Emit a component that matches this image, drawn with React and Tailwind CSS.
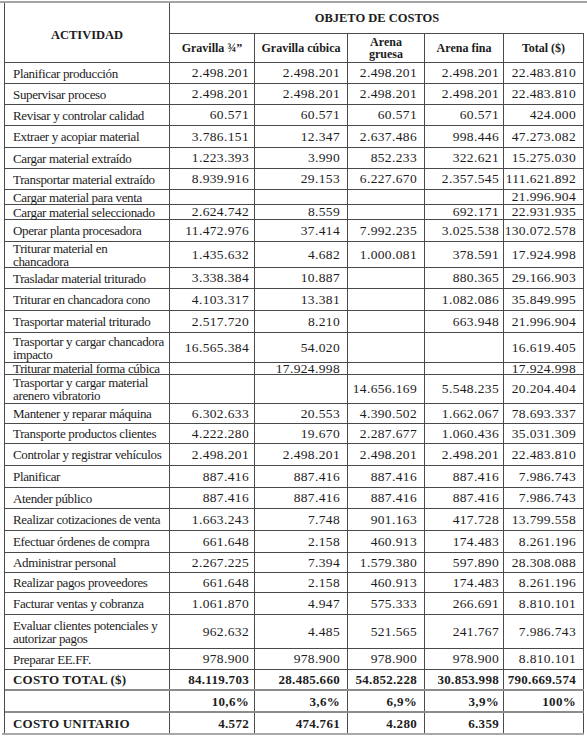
import React from "react";

// filas: [etiqueta, alto, gravilla 3/4, gravilla cubica, arena gruesa, arena fina, total]
const rows = [
  ["Planificar producción", "h-[21px]", "2.498.201", "2.498.201", "2.498.201", "2.498.201", "22.483.810"],
  ["Supervisar proceso", "h-[21px]", "2.498.201", "2.498.201", "2.498.201", "2.498.201", "22.483.810"],
  ["Revisar y controlar calidad", "h-[21px]", "60.571", "60.571", "60.571", "60.571", "424.000"],
  ["Extraer y acopiar material", "h-[22px]", "3.786.151", "12.347", "2.637.486", "998.446", "47.273.082"],
  ["Cargar material extraído", "h-[21px]", "1.223.393", "3.990", "852.233", "322.621", "15.275.030"],
  ["Transportar material extraído", "h-[21px]", "8.939.916", "29.153", "6.227.670", "2.357.545", "111.621.892"],
  ["Cargar material para venta", "h-[15px]", "", "", "", "", "21.996.904"],
  ["Cargar material seleccionado", "h-[15px]", "2.624.742", "8.559", "", "692.171", "22.931.935"],
  ["Operar planta procesadora", "h-[22px]", "11.472.976", "37.414", "7.992.235", "3.025.538", "130.072.578"],
  [["Triturar material en", "chancadora"], "h-[26px]", "1.435.632", "4.682", "1.000.081", "378.591", "17.924.998"],
  ["Trasladar material triturado", "h-[21px]", "3.338.384", "10.887", "", "880.365", "29.166.903"],
  ["Triturar en chancadora cono", "h-[22px]", "4.103.317", "13.381", "", "1.082.086", "35.849.995"],
  ["Trasportar material triturado", "h-[22px]", "2.517.720", "8.210", "", "663.948", "21.996.904"],
  [["Trasportar y cargar chancadora", "impacto"], "h-[30px]", "16.565.384", "54.020", "", "", "16.619.405"],
  ["Triturar material forma cúbica", "h-[12px]", "", "17.924.998", "", "", "17.924.998"],
  [["Trasportar y cargar material", "arenero vibratorio"], "h-[29px]", "", "", "14.656.169", "5.548.235", "20.204.404"],
  ["Mantener y reparar máquina", "h-[20px]", "6.302.633", "20.553", "4.390.502", "1.662.067", "78.693.337"],
  ["Transporte productos clientes", "h-[20px]", "4.222.280", "19.670", "2.287.677", "1.060.436", "35.031.309"],
  ["Controlar y registrar vehículos", "h-[22px]", "2.498.201", "2.498.201", "2.498.201", "2.498.201", "22.483.810"],
  ["Planificar", "h-[22px]", "887.416", "887.416", "887.416", "887.416", "7.986.743"],
  ["Atender público", "h-[21px]", "887.416", "887.416", "887.416", "887.416", "7.986.743"],
  ["Realizar cotizaciones de venta", "h-[22px]", "1.663.243", "7.748", "901.163", "417.728", "13.799.558"],
  ["Efectuar órdenes de compra", "h-[22px]", "661.648", "2.158", "460.913", "174.483", "8.261.196"],
  ["Administrar personal", "h-[20px]", "2.267.225", "7.394", "1.579.380", "597.890", "28.308.088"],
  ["Realizar pagos proveedores", "h-[20px]", "661.648", "2.158", "460.913", "174.483", "8.261.196"],
  ["Facturar ventas y cobranza", "h-[22px]", "1.061.870", "4.947", "575.333", "266.691", "8.810.101"],
  [["Evaluar clientes potenciales y", "autorizar pagos"], "h-[34px]", "962.632", "4.485", "521.565", "241.767", "7.986.743"],
  ["Preparar EE.FF.", "h-[21px]", "978.900", "978.900", "978.900", "978.900", "8.810.101"],
];

// ancho de cada columna (incluye su borde derecho) y su margen derecho
const colW = ["w-[85px]", "w-[93px]", "w-[77px]", "w-[79px]", "w-[80px]"];
const numPad = ["pr-[5px]", "pr-[7px]", "pr-[7px]", "pr-[4px]", "pr-[7px]"];

const line = "border-[#4a4a4a]";
const labelCls = `w-[165px] shrink-0 border-r ${line} pl-[8px] flex items-center whitespace-nowrap text-[13px] tracking-[-0.35px] leading-[13px]`;
const numBase = `shrink-0 border-r ${line} flex items-center justify-end whitespace-nowrap`;

const Label = ({ text }) =>
  Array.isArray(text) ? (
    <span>
      {text[0]}
      <br />
      {text[1]}
    </span>
  ) : (
    <span>{text}</span>
  );

const Row = ({ h, border, label, vals, bold, big }) => (
  <div className={`flex ${h} ${border}`}>
    <div className={`${labelCls} ${bold ? "font-bold text-[12.5px] tracking-[0.2px]" : ""}`}>
      {label && <Label text={label} />}
    </div>
    {vals.map((v, j) => (
      <div
        key={j}
        className={`${numBase} ${colW[j]} ${numPad[j]} ${
          bold ? "font-bold text-[13px] tracking-[0.3px]" : "text-[13.5px] tracking-[0.35px]"
        } ${big ? "leading-[13px]" : "leading-[12px]"}`}
      >
        {v}
      </div>
    ))}
  </div>
);

export default function App() {
  return (
    <div className="w-[587px] h-[738px] bg-white pt-[1px] overflow-hidden font-['Liberation_Serif',serif] text-[#1c1c1c]">
      <div className="h-[2px] w-full bg-[#a3a3a3]" />
      <div className={`ml-[4px] w-[580px] border-l ${line}`}>
        {/* encabezado */}
        <div className={`flex h-[60px] border-b ${line}`}>
          <div className={`w-[165px] shrink-0 border-r ${line} flex items-center justify-center pt-[5px] text-[12.5px] font-bold`}>
            ACTIVIDAD
          </div>
          <div className="flex flex-col flex-1">
            <div className={`h-[31px] border-b ${line} flex items-center justify-center text-[12.5px] font-bold`}>
              OBJETO DE COSTOS
            </div>
            <div className="flex flex-1 text-[12px] font-bold leading-[12px]">
              <div className={`${colW[0]} shrink-0 border-r ${line} flex items-center justify-center`}>Gravilla ¾”</div>
              <div className={`${colW[1]} shrink-0 border-r ${line} flex items-center justify-center`}>Gravilla cúbica</div>
              <div className={`${colW[2]} shrink-0 border-r ${line} flex items-center justify-center text-center`}>
                Arena
                <br />
                gruesa
              </div>
              <div className={`${colW[3]} shrink-0 border-r ${line} flex items-center justify-center`}>Arena fina</div>
              <div className={`${colW[4]} shrink-0 border-r ${line} flex items-center justify-center`}>Total ($)</div>
            </div>
          </div>
        </div>

        {rows.map(([label, h, ...vals], i) => (
          <Row key={i} h={h} border={`border-b ${line}`} label={label} vals={vals} />
        ))}

        <Row
          h="h-[21px]"
          border="border-b-2 border-[#8c8c8c]"
          label="COSTO TOTAL ($)"
          vals={["84.119.703", "28.485.660", "54.852.228", "30.853.998", "790.669.574"]}
          bold
          big
        />
        <Row
          h="h-[22px]"
          border="border-b-2 border-[#8c8c8c]"
          label=""
          vals={["10,6%", "3,6%", "6,9%", "3,9%", "100%"]}
          bold
          big
        />
        <Row
          h="h-[20px]"
          border=""
          label="COSTO UNITARIO"
          vals={["4.572", "474.761", "4.280", "6.359", ""]}
          bold
          big
        />
      </div>
      <div className="ml-[2px] h-[2px] w-[582px] bg-[#a8a8a8]" />
    </div>
  );
}
